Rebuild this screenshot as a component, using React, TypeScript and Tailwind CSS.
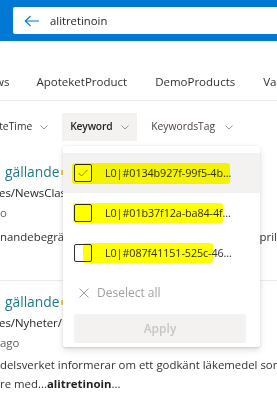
import React from "react";

const Chevron = ({ className = "" }: { className?: string }) => (
  <svg width="8" height="5" viewBox="0 0 8 5" className={className} fill="none">
    <path d="M0.5 0.5 L4 4 L7.5 0.5" stroke="#8a8886" strokeWidth="0.9" />
  </svg>
);

const Check = () => (
  <svg width="12" height="10" viewBox="0 0 12 10" fill="none">
    <path d="M1.5 5 L4.5 8 L10.5 2" stroke="#8a8886" strokeWidth="1" />
  </svg>
);

const rows = [
  { text: "L0|#0134b927f-99f5-4b...", checked: true, hl: { left: 9, top: 10, width: 158, height: 21 } },
  { text: "L0|#01b37f12a-ba84-4f...", checked: false, hl: { left: 10, top: 10, width: 150, height: 20 } },
  { text: "L0|#087f41151-525c-46...", checked: false, hl: { left: 20, top: 10, width: 130, height: 20 } },
];

export default function App() {
  return (
    <div
      className="relative w-[277px] h-[400px] overflow-hidden bg-white text-[#323130]"
      style={{ fontFamily: '"Open Sans", "Noto Sans", sans-serif' }}
    >
      {/* Header */}
      <div className="h-[41px] bg-[#0078d4] pt-[7px] pl-[13px]">
        <div className="flex items-center h-[27px] w-[300px] bg-white rounded-[2px]">
          <svg width="16" height="12" viewBox="0 0 16 12" className="ml-[11px]" fill="none">
            <path d="M15 6 H1.5 M6.5 1 L1.3 6 L6.5 11" stroke="#0078d4" strokeWidth="1.1" />
          </svg>
          <span className="ml-[10px] text-[11.3px] text-[#201f1e] leading-[27px]">alitretinoin</span>
        </div>
      </div>

      {/* Tabs */}
      <div className="h-[60px] border-b border-[#edebe9] pt-[32px] flex whitespace-nowrap text-[11.5px] leading-[18px] text-[#323130]">
        <span className="ml-[-20px]">News</span>
        <span className="ml-[27px]">ApoteketProduct</span>
        <span className="ml-[28px]">DemoProducts</span>
        <span className="ml-[28px]">Various</span>
      </div>

      {/* Filters */}
      <div className="mt-[12px] h-[28px] flex items-center whitespace-nowrap text-[10.3px]">
        <span className="ml-[-23px] text-[#323130]">CreateTime</span>
        <Chevron className="ml-[8px]" />
        <div className="ml-[14px] h-[28px] w-[75px] shrink-0 bg-[#f3f2f1] flex items-center pl-[8px]">
          <span className="font-semibold text-[#201f1e] tracking-[-0.2px]">Keyword</span>
          <Chevron className="ml-[9px]" />
        </div>
        <span className="ml-[14px] text-[#4a3c3c]">KeywordsTag</span>
        <Chevron className="ml-[10px]" />
      </div>

      {/* Results */}
      <div className="mt-[20px] whitespace-nowrap">
        <div className="h-[22px] leading-[22px] text-[13.8px] text-[#1f7a88] pl-[5px] flex items-center">
          <span>gällande</span>
          <span className="ml-[2px] w-[3px] h-[5px] bg-[#f2c94c] rounded-[1px]" />
        </div>
        <div className="h-[20px] leading-[20px] text-[11.4px] text-[#201f1e] ml-[-1px]">es/NewsClass</div>
        <div className="h-[20px] leading-[20px] text-[11.4px] text-[#605e5c]">o</div>
        <div className="mt-[4px] h-[20px] leading-[20px] text-[11.4px] text-[#323130] flex">
          <span className="w-[261px] overflow-hidden">nandebegrä</span>
          <span>april</span>
        </div>
        <div className="mt-[33px] border-t border-[#edebe9]" />
        <div className="mt-[10px] h-[22px] leading-[22px] text-[13.8px] text-[#1f7a88] pl-[5px] flex items-center">
          <span>gällande</span>
          <span className="ml-[2px] w-[3px] h-[5px] bg-[#f2c94c] rounded-[1px]" />
        </div>
        <div className="h-[20px] leading-[20px] text-[11.4px] text-[#201f1e] ml-[-1px]">es/Nyheter/</div>
        <div className="h-[20px] leading-[20px] text-[11.4px] text-[#605e5c]">ago</div>
        <div className="mt-[2px] h-[20px] leading-[20px] text-[11.4px] text-[#323130]">
          delsverket informerar om ett godkänt läkemedel som
        </div>
        <div className="h-[18px] leading-[18px] text-[11.4px] text-[#323130]">
          re med...<b className="font-bold text-[#201f1e]">alitretinoin</b>...
        </div>
      </div>

      {/* Dropdown panel */}
      <div className="absolute left-[63px] top-[146px] w-[197px] h-[201px] bg-white rounded-[2px] shadow-[0_3px_7px_rgba(0,0,0,0.13),0_0.6px_1.8px_rgba(0,0,0,0.11)] pt-[7px]">
        {rows.map((r, i) => (
          <div
            key={i}
            className={`relative h-[40px] flex items-center pl-[11px] ${i === 0 ? "bg-[#f3f2f1]" : ""}`}
          >
            <div className="w-[18px] h-[18px] border border-[#323130] rounded-[2px] bg-white flex items-center justify-center">
              {r.checked && <Check />}
            </div>
            <span className="ml-[13px] text-[10.8px] text-[#323130] whitespace-nowrap tracking-[-0.1px]">{r.text}</span>
            <div
              className="absolute bg-[#ffff00] mix-blend-multiply rounded-[3px]"
              style={{ left: r.hl.left, top: r.hl.top, width: r.hl.width, height: r.hl.height }}
            />
          </div>
        ))}
        <div className="h-[40px] flex items-center pl-[16px] text-[#a19f9d]">
          <svg width="10" height="10" viewBox="0 0 10 10" fill="none">
            <path d="M0.5 0.5 L9.5 9.5 M9.5 0.5 L0.5 9.5" stroke="#a19f9d" strokeWidth="1" />
          </svg>
          <span className="ml-[8px] text-[12px]">Deselect all</span>
        </div>
        <div className="ml-[11px] mt-[1px] w-[172px] h-[29px] bg-[#f3f2f1] rounded-[2px] flex items-center justify-center text-[12px] font-semibold text-[#c8c6c4]">
          Apply
        </div>
      </div>
    </div>
  );
}
